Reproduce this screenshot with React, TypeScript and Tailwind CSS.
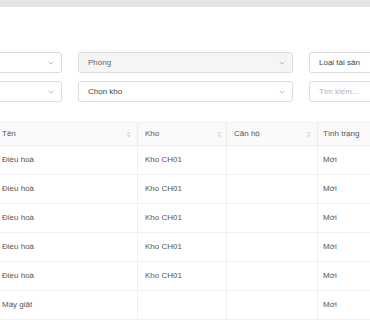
import React from "react";

const Chevron = () => (
  <svg width="6" height="4" viewBox="0 0 6 4" className="shrink-0">
    <path d="M0.6 0.8 L3 3.1 L5.4 0.8" fill="none" stroke="#a8a8a8" strokeWidth="0.8" />
  </svg>
);

const SortIcon = () => (
  <svg width="5" height="7" viewBox="0 0 5 7" className="shrink-0">
    <path d="M2.5 0.5 L4.5 2.8 L0.5 2.8 Z" fill="#d4d4d4" />
    <path d="M2.5 6.5 L4.5 4.2 L0.5 4.2 Z" fill="#d4d4d4" />
  </svg>
);

const rows = [
  { name: "Điều hoà", kho: "Kho CH01", can: "", tt: "Mới" },
  { name: "Điều hoà", kho: "Kho CH01", can: "", tt: "Mới" },
  { name: "Điều hoà", kho: "Kho CH01", can: "", tt: "Mới" },
  { name: "Điều hoà", kho: "Kho CH01", can: "", tt: "Mới" },
  { name: "Điều hoà", kho: "Kho CH01", can: "", tt: "Mới" },
  { name: "Máy giặt", kho: "", can: "", tt: "Mới" },
];

const cols = ["w-[142px]", "w-[89px]", "w-[91px]", "w-[100px]"];

export default function App() {
  return (
    <div
      className="w-[370px] h-[320px] overflow-hidden bg-white text-[8px] text-[#555]"
      style={{ fontFamily: '"Liberation Sans", Arial, sans-serif' }}
    >
      <div className="h-[7px] bg-[#e4e4e4]" />
      <div className="mt-[45px] ml-[-100px] w-[600px] flex flex-col gap-[8px]">
        <div className="flex gap-[16px] h-[21px]">
          <div className="w-[162px] shrink-0 flex items-center justify-end pr-[7px] border border-[#dcdcdc] rounded-[3px] bg-white">
            <Chevron />
          </div>
          <div className="w-[215px] shrink-0 flex items-center justify-between px-[9px] pr-[7px] border border-[#dcdcdc] rounded-[3px] bg-[#f5f5f5] text-[#666]">
            <span>Phòng</span>
            <Chevron />
          </div>
          <div className="w-[150px] shrink-0 flex items-center px-[9px] border border-[#dcdcdc] rounded-[3px] bg-white text-[#444]">
            <span>Loại tài sản</span>
          </div>
        </div>
        <div className="flex gap-[16px] h-[21px]">
          <div className="w-[162px] shrink-0 flex items-center justify-end pr-[7px] border border-[#dcdcdc] rounded-[3px] bg-white">
            <Chevron />
          </div>
          <div className="w-[215px] shrink-0 flex items-center justify-between px-[9px] pr-[7px] border border-[#dcdcdc] rounded-[3px] bg-white text-[#444]">
            <span>Chọn kho</span>
            <Chevron />
          </div>
          <div className="w-[150px] shrink-0 flex items-center px-[9px] border border-[#dcdcdc] rounded-[3px] bg-white text-[#b5b5b5]">
            <span>Tìm kiếm...</span>
          </div>
        </div>
      </div>

      <div className="mt-[20px] ml-[-5px] w-[422px] border-t border-[#f0f0f0]">
        <div className="flex h-[23px] bg-[#fafafa] border-b border-[#ececec]">
          <div className={`${cols[0]} shrink-0 flex items-center justify-between pl-[7px] pr-[6px]`}>
            <span>Tên</span>
            <SortIcon />
          </div>
          <div className={`${cols[1]} shrink-0 flex items-center justify-between pl-[7px] pr-[4px] border-l border-[#ececec]`}>
            <span>Kho</span>
            <SortIcon />
          </div>
          <div className={`${cols[2]} shrink-0 flex items-center justify-between pl-[7px] pr-[6px] border-l border-[#ececec]`}>
            <span>Căn hộ</span>
            <SortIcon />
          </div>
          <div className={`${cols[3]} shrink-0 flex items-center pl-[5px] border-l border-[#ececec]`}>
            <span>Tình trạng</span>
          </div>
        </div>
        {rows.map((r, i) => (
          <div key={i} className="flex h-[29px] border-b border-[#f0f0f0]">
            <div className={`${cols[0]} shrink-0 flex items-center pl-[7px]`}>{r.name}</div>
            <div className={`${cols[1]} shrink-0 flex items-center pl-[7px] border-l border-[#f0f0f0]`}>{r.kho}</div>
            <div className={`${cols[2]} shrink-0 flex items-center pl-[7px] border-l border-[#f0f0f0]`}>{r.can}</div>
            <div className={`${cols[3]} shrink-0 flex items-center pl-[5px] border-l border-[#f0f0f0]`}>{r.tt}</div>
          </div>
        ))}
      </div>
    </div>
  );
}
